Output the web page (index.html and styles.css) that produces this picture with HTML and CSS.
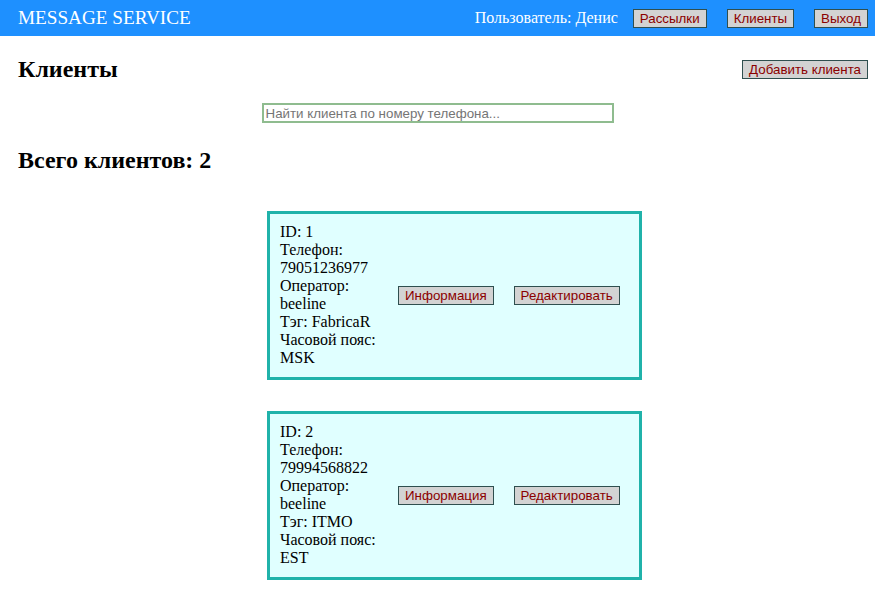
FILE: index.html
```html
<!DOCTYPE html>
<html lang="ru">
<head>
<meta charset="utf-8">
<title>Message Service</title>
<link rel="stylesheet" href="styles.css">
</head>
<body>
<header class="topbar">
  <div class="brand">MESSAGE SERVICE</div>
  <div class="nav">
    <span class="user">Пользователь: Денис</span>
    <button class="btn">Рассылки</button>
    <button class="btn">Клиенты</button>
    <button class="btn">Выход</button>
  </div>
</header>
<main class="content">
  <div class="title-row">
    <h2 class="heading">Клиенты</h2>
    <button class="btn">Добавить клиента</button>
  </div>
  <div class="search-row">
    <input class="search" type="text" placeholder="Найти клиента по номеру телефона...">
  </div>
  <h2 class="heading total">Всего клиентов: 2</h2>
  <div class="cards">
    <div class="card">
      <div class="info">
        <div>ID: 1</div>
        <div>Телефон: 79051236977</div>
        <div>Оператор: beeline</div>
        <div>Тэг: FabricaR</div>
        <div>Часовой пояс: MSK</div>
      </div>
      <button class="btn">Информация</button>
      <button class="btn">Редактировать</button>
    </div>
    <div class="card">
      <div class="info">
        <div>ID: 2</div>
        <div>Телефон: 79994568822</div>
        <div>Оператор: beeline</div>
        <div>Тэг: ITMO</div>
        <div>Часовой пояс: EST</div>
      </div>
      <button class="btn">Информация</button>
      <button class="btn">Редактировать</button>
    </div>
  </div>
</main>
</body>
</html>
```
FILE: styles.css
```css
html, body {
  margin: 0;
  padding: 0;
  background: #ffffff;
  font-family: "Liberation Serif", "Times New Roman", serif;
  font-size: 16px;
  color: #000;
}

.topbar {
  height: 36px;
  background: #1e90ff;
  display: flex;
  align-items: center;
  justify-content: space-between;
  padding: 0 7px 0 18px;
}

.brand {
  color: #fff;
  font-size: 19.2px;
}

.nav {
  display: flex;
  align-items: center;
  gap: 20px;
}

.user {
  color: #fff;
  font-size: 16px;
  margin-right: -5px;
}

.btn {
  font-family: "Liberation Sans", Arial, sans-serif;
  font-size: 13.333px;
  line-height: 15px;
  color: #8b0000;
  background: #d3d3d3;
  border: 1px solid #2f4f4f;
  padding: 1px 6px;
  margin: 0;
  border-radius: 0;
}

.content {
  padding: 0 7px 0 18px;
}

.title-row {
  display: flex;
  align-items: center;
  justify-content: space-between;
  margin-top: 20px;
}

.heading {
  margin: 0;
  font-size: 24px;
  font-weight: bold;
}

.search-row {
  display: flex;
  justify-content: center;
  margin-top: 20px;
  padding-right: 11px;
}

.search {
  width: 352px;
  height: 20px;
  box-sizing: border-box;
  border: 2px solid #8fbc8f;
  padding: 0 2px;
  font-family: "Liberation Sans", Arial, sans-serif;
  font-size: 13.333px;
  outline: none;
}

.search::placeholder {
  color: #757575;
}

.total {
  margin-top: 24px;
}

.cards {
  display: flex;
  flex-direction: column;
  gap: 31px;
  margin-top: 37px;
  padding-left: 249px;
}

.card {
  width: 375px;
  box-sizing: border-box;
  border: 3px solid #20b2aa;
  background: #e0ffff;
  display: flex;
  align-items: center;
  gap: 20px;
  padding: 9px 19px 10px 10px;
}

.info {
  width: 98px;
  line-height: 18px;
}
```
